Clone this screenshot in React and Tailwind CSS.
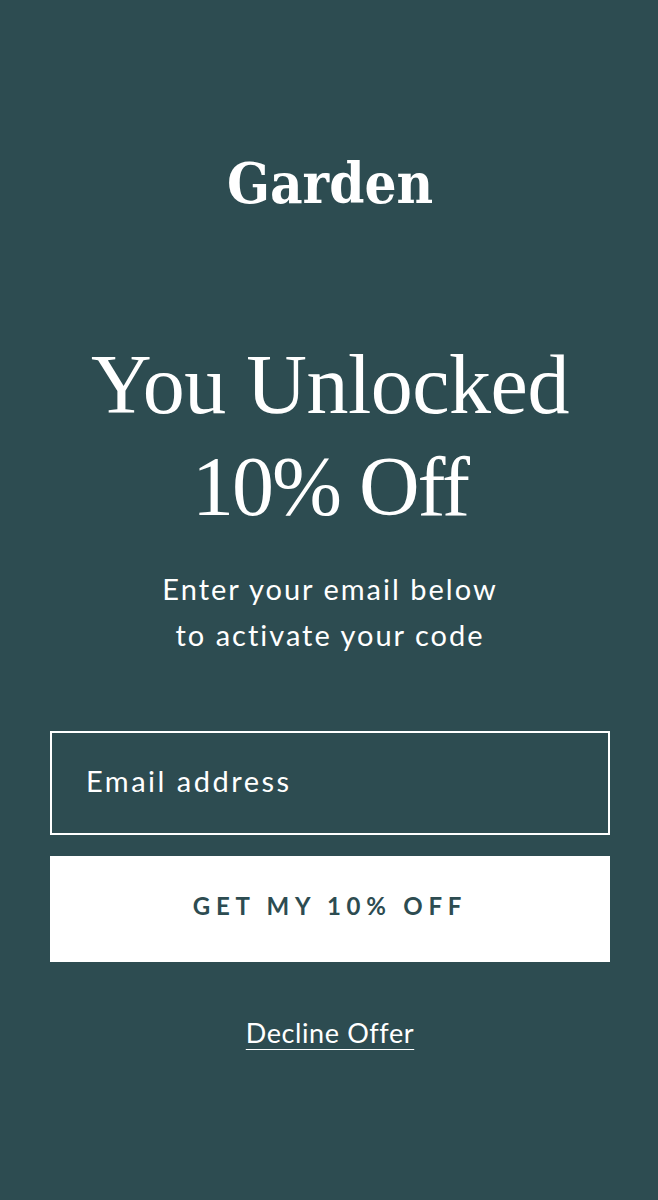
import React from "react";

function App() {
  return (
    <div className="min-h-[1200px] w-full bg-[#2d4c51] flex flex-col items-center pl-[50px] pr-[48px] text-white">
      <h1
        className="pt-[153px] h-[213px] text-[56px] leading-[60px] font-bold"
        style={{ fontFamily: '"DejaVu Serif Condensed", "DejaVu Serif", serif' }}
      >
        Garden
      </h1>

      <h2 className="mt-[121px] text-center text-[84px] leading-[102px] font-normal tracking-[-0.5px] font-['Liberation_Serif',serif]">
        You Unlocked
        <br />
        <span className="tracking-[-2px]">10% Off</span>
      </h2>

      <p className="mt-[28px] text-center text-[29px] leading-[46px] tracking-[2px] font-['Lato',sans-serif]">
        Enter your email below
        <br />
        to activate your code
      </p>

      <form className="w-full flex flex-col mt-[73px]">
        <input
          type="email"
          placeholder="Email address"
          className="w-full h-[104px] border-2 border-white bg-transparent pl-[34px] pr-4 pb-[5px] text-[29px] tracking-[2.5px] text-white placeholder:text-white outline-none font-['Lato',sans-serif]"
        />
        <button
          type="button"
          className="mt-[21px] w-full h-[106px] pb-[6px] bg-white text-[#2d4c51] text-[24px] font-bold tracking-[0.24em] font-['Lato',sans-serif]"
        >
          GET MY 10% OFF
        </button>
      </form>

      <a
        href="#"
        className="mt-[53px] text-[27px] leading-[36px] tracking-[0.6px] underline underline-offset-[6px] decoration-1 font-['Lato',sans-serif]"
      >
        Decline Offer
      </a>
    </div>
  );
}

export default App;
